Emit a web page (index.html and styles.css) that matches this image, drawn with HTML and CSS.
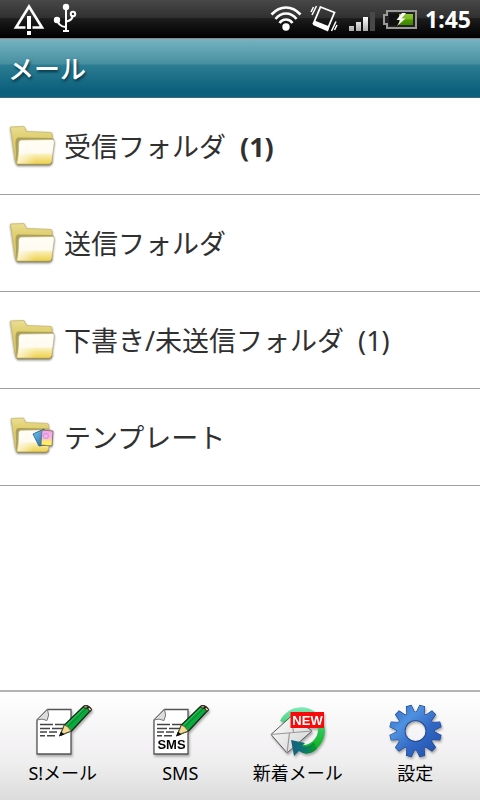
FILE: index.html
```html
<!DOCTYPE html>
<html lang="ja">
<head>
<meta charset="utf-8">
<meta name="viewport" content="width=device-width, initial-scale=1">
<title>メール</title>
<link rel="stylesheet" href="styles.css">
</head>
<body>
<svg class="defs" width="0" height="0" aria-hidden="true">
  <defs>
    <linearGradient id="backFill" x1="0" y1="0" x2="0" y2="1"><stop offset="0" stop-color="#eade94"/><stop offset=".3" stop-color="#e0d070"/><stop offset="1" stop-color="#d3c058"/></linearGradient>
    <linearGradient id="frontFill" x1="0" y1="0" x2="0" y2="1"><stop offset="0" stop-color="#fffdf4"/><stop offset=".55" stop-color="#fffbf2"/><stop offset=".62" stop-color="#faefb4"/><stop offset="1" stop-color="#edd048"/></linearGradient>
    <linearGradient id="frontShine" x1="0" y1="0" x2="1" y2="0"><stop offset="0" stop-color="#fff" stop-opacity=".7"/><stop offset=".5" stop-color="#fff" stop-opacity="0"/></linearGradient>
    <linearGradient id="barFill" x1="0" y1="0" x2="0" y2="1"><stop offset="0" stop-color="#fff"/><stop offset="1" stop-color="#aaa"/></linearGradient>
    <linearGradient id="batFill" x1="0" y1="0" x2="0" y2="1"><stop offset="0" stop-color="#8ec63a"/><stop offset=".48" stop-color="#78b81c"/><stop offset=".52" stop-color="#4d9a00"/><stop offset="1" stop-color="#418400"/></linearGradient>
    <linearGradient id="arcFill" x1="0" y1="0" x2="0" y2="1"><stop offset="0" stop-color="#7eeab9"/><stop offset=".5" stop-color="#2fc558"/><stop offset="1" stop-color="#08ad12"/></linearGradient>
    <linearGradient id="arrowFill" x1="0" y1="0" x2="1" y2="0"><stop offset="0" stop-color="#15607f"/><stop offset=".5" stop-color="#0c7472"/><stop offset="1" stop-color="#08a024"/></linearGradient>
    <linearGradient id="mailFill" x1="0" y1="0" x2="1" y2="1"><stop offset="0" stop-color="#fff"/><stop offset="1" stop-color="#cfcfcf"/></linearGradient>
    <linearGradient id="gearFill" x1="0" y1="0" x2="1" y2="1"><stop offset="0" stop-color="#2b62c0"/><stop offset=".32" stop-color="#4f92e0"/><stop offset=".6" stop-color="#3268c4"/><stop offset="1" stop-color="#1e4ca8"/></linearGradient>
    <linearGradient id="cardBlue" x1="0" y1="0" x2="1" y2="1"><stop offset="0" stop-color="#7cc8f0"/><stop offset="1" stop-color="#1267a8"/></linearGradient>
    <linearGradient id="cardPink" x1="0" y1="0" x2="0" y2="1"><stop offset="0" stop-color="#f8a0ea"/><stop offset=".5" stop-color="#f7b8dc"/><stop offset=".75" stop-color="#fff06a"/><stop offset="1" stop-color="#fff24a"/></linearGradient>
    <path id="tooth" d="M26.500 13 28 5.200H33L34.500 13Z"/>
    <g id="teeth">
      <use href="#tooth" transform="rotate(15 30.500 31)"/><use href="#tooth" transform="rotate(45 30.500 31)"/><use href="#tooth" transform="rotate(75 30.500 31)"/><use href="#tooth" transform="rotate(105 30.500 31)"/><use href="#tooth" transform="rotate(135 30.500 31)"/><use href="#tooth" transform="rotate(165 30.500 31)"/><use href="#tooth" transform="rotate(195 30.500 31)"/><use href="#tooth" transform="rotate(225 30.500 31)"/><use href="#tooth" transform="rotate(255 30.500 31)"/><use href="#tooth" transform="rotate(285 30.500 31)"/><use href="#tooth" transform="rotate(315 30.500 31)"/><use href="#tooth" transform="rotate(345 30.500 31)"/>
    </g>
    <mask id="gearMask"><g fill="#fff"><use href="#teeth"/><circle cx="30.500" cy="31" r="19"/></g><circle cx="30.500" cy="31" r="10.800" fill="#000"/></mask>
    <mask id="gearEdge"><g fill="#fff" stroke="#fff" stroke-width="1"><use href="#teeth"/><circle cx="30.500" cy="31" r="19"/></g><circle cx="30.500" cy="31" r="10" fill="#000"/></mask>
  </defs>
  <symbol id="folder" viewBox="0 0 50 50">
    <path d="M2.500 5 16 4.500 18.500 9.500 43 10.500Q44 10.500 44 13V40H9Q7.500 40 7 37Z" fill="url(#backFill)" stroke="#cbbb68" stroke-width=".8"/>
    <path d="M7.500 41Q8.500 32 7.500 21Q7.500 15.500 10.500 15.500L43.500 16Q46 16 46 19L44 40Q44 42.500 41 42.500H9Z" fill="#aaa05a"/>
    <path d="M8.500 41Q11 33 10.500 23Q10.500 18 13.500 18L44.500 17.500Q46.500 17.500 46.300 20L43.800 39Q43.500 42 41 42H9.500Z" fill="url(#frontFill)" stroke="#bdb078" stroke-width=".6"/>
    <path d="M9.500 41.500Q11 36 10.900 30Q20 34 45 30L43.800 39Q43.500 42 41 42Z" fill="url(#frontShine)"/>
    <path d="M9 42.800H41Q43.500 42.800 44 40" fill="none" stroke="#9c8f54" stroke-width="1"/>
  </symbol>
  <symbol id="memo" viewBox="0 0 60 60">
    <path d="M14.500 9.500H38V54H4V20Z" fill="#fff" stroke="#555" stroke-width="1.300"/>
    <path d="M14.500 9.500Q17 15 14 20.500Q9 18 4 20Z" fill="#ddd" stroke="#777"/>
    <path d="M7 24.500H20M22 24.500H32M7 28.500H17M19 28.500H30M7 32H14M16 32H24M7 35.700H12M14 35.700H22" stroke="#444" stroke-width="1.400"/>
  </symbol>
  <symbol id="pencil" viewBox="0 0 60 60">
    <path d="M27 35.500 31.500 25 51 6Q55 4.500 58.500 9.500L38.500 31Z" fill="#0caa3e" stroke="#152b17" stroke-width="1.300" stroke-linejoin="round"/>
    <path d="M34.500 27 55 7" stroke="#007a2a" stroke-width="1"/><path d="M33 25.500 52 7" stroke="#2cca60" stroke-width="1"/>
    <path d="M27.500 35 31.500 25 35 27 38 31Z" fill="#f5dc94" stroke="#5e502c" stroke-width=".7"/><path d="M26 36.500 28 31.500 31.500 34.500Z" fill="#111"/>
    <path d="M51 6Q55 4.500 58.500 9.500L57 11.500Q55 7.500 50.500 7.500Z" fill="#eac98b" stroke="#222"/><circle cx="54.800" cy="7.500" r="1.300" fill="#222"/>
  </symbol>
</svg>

<div class="screen">
  <div class="status">
    <svg class="status-left" viewBox="0 0 90 38" role="img" aria-label="警告、USB接続">
      <path d="M25.500 27.500H16L29 6.500 42 27.500H32.500" fill="none" stroke="#fff" stroke-width="2.600"/>
      <path d="M27 16H31V29H27ZM27 31H31V35H27Z" fill="#fff"/>
      <g fill="none" stroke="#fff" stroke-width="2"><path d="M66 6V31M63 31H69M57.500 20Q58 26 65.500 27M72.500 15Q73 20 66.500 21.500"/><circle cx="73" cy="14" r="2.200"/></g>
      <circle cx="66" cy="7" r="3.200" fill="#fff"/><circle cx="57" cy="20" r="3.200" fill="#fff"/>
    </svg>
    <div class="status-right">
      <svg class="status-icons" viewBox="0 0 150 38" role="img" aria-label="Wi-Fi、マナーモード、電波、充電中">
        <g fill="none" stroke="#fff" stroke-width="2.600"><path d="M1.500 14.500Q8 7.500 16 7.500T30.500 14.500"/><path d="M5.500 19Q10 13.500 16 13.500T26.500 19"/><path d="M9.500 23Q12 19.500 16 19.500T22.500 23"/></g><circle cx="16" cy="27" r="3.700" fill="#fff"/>
        <path d="M50.500 7 64.500 12.500 57.500 29 43.500 23.500Z" fill="none" stroke="#fff" stroke-width="1.800"/><path d="M44.500 20.500 59.500 26.500 58 31.500 43 25Z" fill="#fff"/>
        <path d="M46.500 6 42 15M43.500 7 41 12M66 21.500 61.500 31M67 25 64.500 30" stroke="#fff" stroke-width="1.500"/>
        <path d="M79 26H84V31H79ZM86 22H91V31H86ZM93 17H98V31H93Z" fill="url(#barFill)"/><path d="M100 12H105V31H100Z" fill="#484848"/>
        <path d="M117 11H146V28H117V24H114V15H117Z" fill="#222" stroke="#999" stroke-width="2"/><path d="M127 14H143V25H127Z" fill="url(#batFill)"/><path d="M119 13.500H129V25.500H119Z" fill="#111"/><path d="M132 13 126.500 20H130.500L127 26 135.500 18.500H131.500L136 13Z" fill="#fff"/>
      </svg>
      <time class="clock">1:45</time>
    </div>
  </div>

  <header class="title-bar"><h1>メール</h1></header>

  <main class="folders">
    <a class="folder" href="#inbox"><svg class="folder-icon" aria-hidden="true"><use href="#folder"/></svg><span>受信フォルダ</span><b class="count">(1)</b></a>
    <a class="folder" href="#sent"><svg class="folder-icon" aria-hidden="true"><use href="#folder"/></svg><span>送信フォルダ</span></a>
    <a class="folder" href="#drafts"><svg class="folder-icon" aria-hidden="true"><use href="#folder"/></svg><span>下書き/未送信フォルダ</span><span class="count">(1)</span></a>
    <a class="folder" href="#templates"><svg class="folder-icon" viewBox="0 0 50 50" aria-hidden="true"><use href="#folder" x="1" y="1" width="45" height="45"/><path d="M25 21 36 16 38 32 31 33Z" fill="url(#cardBlue)" stroke="#155788" stroke-width=".8"/><path d="M34 17 45 18 44 33 33 32Z" fill="url(#cardPink)" stroke="#766" stroke-width=".8"/><circle cx="38" cy="23" r="2.500" fill="none" stroke="#c890f0"/></svg><span>テンプレート</span></a>
  </main>

  <nav class="toolbar">
    <button type="button"><svg class="tool-icon" viewBox="0 0 60 60" aria-hidden="true"><use href="#memo"/><use href="#pencil"/></svg><span>S!メール</span></button>
    <button type="button"><svg class="tool-icon" viewBox="0 0 60 60" aria-hidden="true"><use href="#memo"/><text class="sms-mark" x="21.500" y="48.500" text-anchor="middle">SMS</text><use href="#pencil"/></svg><span>SMS</span></button>
    <button type="button"><svg class="tool-icon" viewBox="0 0 60 60" aria-hidden="true"><path d="M12 21A23.500 23.500 0 1 1 37 54L34 45A15.500 15.500 0 1 0 20 24Z" fill="url(#arcFill)"/><path d="M3 34.500 23.500 16 44 31 19 53Z" fill="url(#mailFill)" stroke="#555" stroke-width="1"/><path d="M3 34.500 25.500 32.500 23.500 16M19 53 21.500 33M25.500 32.500 44 31" fill="none" stroke="#999" stroke-width="1.200"/><path d="M23 40 37 43 34 46Q40 48 46 42L49 49Q40 57 31 51L26 56Z" fill="url(#arrowFill)"/><path d="M22.500 12H56V28H22.500Z" fill="#f70a0a"/><text class="new-mark" x="39.500" y="24.500" text-anchor="middle">NEW</text></svg><span>新着メール</span></button>
    <button type="button"><svg class="tool-icon" viewBox="0 0 60 60" aria-hidden="true"><path d="M0 0H60V60H0Z" fill="#1d4388" mask="url(#gearEdge)"/><path d="M4 4H57V57H4Z" fill="url(#gearFill)" mask="url(#gearMask)"/></svg><span>設定</span></button>
  </nav>
</div>
</body>
</html>
```

FILE: styles.css
```css
* {
  box-sizing: border-box;
}

body {
  margin: 0;
  background: #fff;
  color: #303030;
  font-family: "Noto Sans", "Noto Sans CJK JP", sans-serif;
}

.defs {
  position: absolute;
}

.screen {
  display: flex;
  flex-direction: column;
  min-height: 100vh;
}

.status {
  display: flex;
  justify-content: space-between;
  height: 38px;
  background: linear-gradient(#484848, #303030 47%, #1c1c1c 49%, #000);
  color: #fff;
}

.status-left {
  width: 90px;
  height: 38px;
}

.status-right {
  display: flex;
  align-items: center;
  gap: 5px;
  padding-right: 9px;
}

.status-icons {
  width: 150px;
  height: 38px;
}

.clock {
  font-size: 23px;
  font-weight: 700;
  line-height: 38px;
}

.title-bar {
  display: flex;
  align-items: center;
  height: 60px;
  padding: 2px 8px 0;
  border-top: 1px solid #8e8788;
  border-bottom: 1px solid #38687a;
  background: linear-gradient(#76b3c2, #468fa0 43%, #2c7d93 45%, #0b5f7b 90%);
}

.title-bar h1 {
  margin: 0;
  color: #fff;
  font-size: 26px;
  font-weight: 500;
  line-height: 40px;
  text-shadow: 1px 2px 3px #003444;
}

.folders {
  flex: 1;
}

.folder {
  display: flex;
  align-items: center;
  height: 97px;
  padding: 2px 8px 0;
  border-bottom: 1px solid #a0a0a0;
  color: inherit;
  font-size: 27px;
  line-height: 40px;
  text-decoration: none;
}

.folder-icon {
  flex: none;
  width: 50px;
  height: 50px;
  margin-right: 6px;
  filter: drop-shadow(0 1px 1px #888);
}

.count {
  margin-left: 14px;
}

.toolbar {
  display: grid;
  grid-template-columns: repeat(4, 1fr);
  height: 110px;
  padding: 0 6px 0 4px;
  border-top: 2px solid #b4b4b4;
  background: linear-gradient(#fff, #f3f1f3 50%, #f0eff0 64%, #dcdcdc);
}

.toolbar button {
  display: flex;
  flex-direction: column;
  align-items: center;
  padding: 8px 0 0;
  border: 0;
  background: none;
  color: #000;
  font: inherit;
  font-size: 18px;
  line-height: 26px;
  white-space: nowrap;
}

.tool-icon {
  width: 60px;
  height: 60px;
  filter: drop-shadow(1px 2px 1px #aaa);
}

.sms-mark,
.new-mark {
  font-family: "Liberation Sans", Arial, sans-serif;
  font-size: 13px;
  font-weight: 700;
}

.new-mark {
  fill: #fff;
}
```
